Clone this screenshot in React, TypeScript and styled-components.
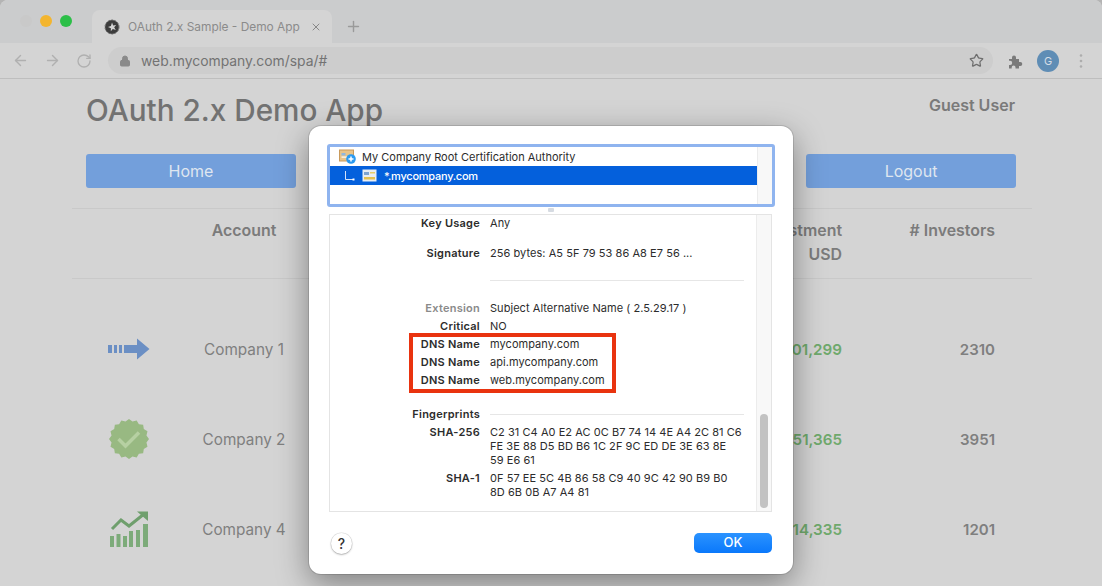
import React from 'react'
import styled, { createGlobalStyle } from 'styled-components'
import { ArrowLeft, ArrowRight, RotateCw, Lock, Star, X, Plus } from 'lucide-react'

const GlobalStyle = createGlobalStyle`
  html, body {
    margin: 0;
    padding: 0;
    background: #b4b4b4;
    font-family: Inter, "Liberation Sans", sans-serif;
  }
`

const Page = styled.div`
  position: relative;
  width: 1102px;
  height: 586px;
  overflow: hidden;
  background: #d4d4d4;
  border-radius: 8px 8px 0 0;
`

const TabStrip = styled.div`
  display: flex;
  align-items: flex-end;
  height: 43px;
  padding-left: 20px;
  box-sizing: border-box;
  background: #cbcccd;
`

const Lights = styled.div`
  display: flex;
  gap: 8px;
  align-self: flex-start;
  margin-top: 15px;
  width: 72px;
`

const Light = styled.span<{ color: string }>`
  width: 12px;
  height: 12px;
  border-radius: 50%;
  background: ${props => props.color};
`

const Tab = styled.div`
  display: flex;
  align-items: center;
  width: 240px;
  height: 33px;
  box-sizing: border-box;
  padding: 0 10px 0 12px;
  border-radius: 8px 8px 0 0;
  background: #d4d4d4;
  color: #8b8b8b;
  font-size: 11.9px;
`

const TabTitle = styled.span`
  flex: 1;
  margin-left: 8px;
  white-space: nowrap;
`

const NewTab = styled.span`
  display: flex;
  align-self: center;
  margin: 9px 0 0 13px;
  color: #9a9a9a;
`

const Toolbar = styled.div`
  display: flex;
  align-items: center;
  height: 36px;
  box-sizing: border-box;
  padding: 0 12px;
  border-bottom: 1px solid #bebebe;
  background: #d4d4d4;
  color: #b0b0b0;
`

const NavIcons = styled.div`
  display: flex;
  align-items: center;
  gap: 15px;
  width: 96px;
`

const Omnibox = styled.div`
  display: flex;
  align-items: center;
  width: 885px;
  flex-shrink: 0;
  height: 27px;
  box-sizing: border-box;
  padding: 0 9px 0 11px;
  border-radius: 14px;
  background: #cdcdcd;
  color: #8a8a8a;
`

const UrlText = styled.span`
  flex: 1;
  margin-left: 10px;
  font-size: 13.9px;
  color: #737373;
`

const ToolbarEnd = styled.div`
  display: flex;
  align-items: center;
  margin-left: 15px;
  color: #7a7a7a;
`

const Avatar = styled.span`
  display: flex;
  align-items: center;
  justify-content: center;
  flex-shrink: 0;
  width: 22px;
  height: 22px;
  margin: 0 20px 0 13px;
  border-radius: 50%;
  background: #5f8db5;
  color: #d4dde6;
  font-size: 11px;
`

const Content = styled.div`
  padding: 0 70px 0 72px;
`

const TitleRow = styled.div`
  display: flex;
  align-items: flex-start;
  justify-content: space-between;
  height: 75px;
  padding: 0 17px 0 14px;
`

const Title = styled.h1`
  margin: 12px 0 0;
  color: #727272;
  font-size: 29.7px;
  font-weight: 500;
  line-height: 38px;
`

const UserName = styled.div`
  margin-top: 16px;
  color: #7a7a7a;
  font-size: 16px;
  font-weight: 600;
  line-height: 20px;
`

const ButtonRow = styled.div`
  display: flex;
  justify-content: space-between;
  padding: 0 16px 0 14px;
`

const PageButton = styled.div`
  width: 210px;
  height: 34px;
  border-radius: 3px;
  background: #739fdb;
  color: #dfe6f0;
  font-size: 16px;
  line-height: 34px;
  text-align: center;
`

const Table = styled.div`
  margin-top: 20px;
  border-top: 1px solid #c9c9c9;
`

const rowGrid = `
  display: grid;
  grid-template-columns: 116px 112px 1fr 90px 153px;
  padding-right: 37px;
`

const HeaderRow = styled.div`
  ${rowGrid}
  height: 70px;
  padding-top: 10px;
  box-sizing: border-box;
  border-bottom: 1px solid #c9c9c9;
  color: #7b7b7b;
  font-size: 15.9px;
  font-weight: 600;
  line-height: 24px;
`

const BodyRow = styled.div`
  ${rowGrid}
  align-items: center;
  height: 90px;
  color: #7f7f7f;
  font-size: 15.3px;
`

const TableBody = styled.div`
  padding-top: 25px;
`

const IconCell = styled.div`
  display: flex;
  justify-content: center;
  margin-left: 36px;
  width: 42px;
`

const CompanyCell = styled.div`
  text-align: center;
  white-space: nowrap;
`

const HeadCell = styled.div<{ align?: string }>`
  grid-column: ${props => (props.align === 'center' ? '2' : 'auto')};
  text-align: ${props => props.align || 'right'};
  white-space: nowrap;
`

const Amount = styled.div`
  grid-column: 4;
  color: #6fa96c;
  font-weight: 600;
  font-size: 15.2px;
  text-align: right;
`

const Count = styled.div`
  font-weight: 600;
  font-size: 15px;
  text-align: right;
`

const Dialog = styled.div`
  position: absolute;
  top: 126px;
  left: 309px;
  width: 484px;
  height: 448px;
  box-sizing: border-box;
  padding: 18px 18px 0 18px;
  border-radius: 12px;
  background: #fff;
  box-shadow: 0 0 0 1px rgba(0, 0, 0, 0.12), 0 10px 32px rgba(0, 0, 0, 0.4);
  color: #2c2c2c;
  font-size: 11px;
  line-height: 14px;
`

const Chain = styled.div`
  display: flex;
  width: 448px;
  height: 63px;
  box-sizing: border-box;
  border: 3px solid #8fb4ef;
  border-radius: 3px;
`

const ChainList = styled.div`
  flex: 1;
`

const ChainRow = styled.div<{ selected?: boolean }>`
  display: flex;
  align-items: center;
  height: 19px;
  padding-left: ${props => (props.selected ? '14px' : '9px')};
  background: ${props => (props.selected ? '#0460dc' : 'transparent')};
  color: ${props => (props.selected ? '#fff' : '#2c2c2c')};
  font-weight: ${props => (props.selected ? 500 : 400)};
  letter-spacing: ${props => (props.selected ? '-0.25px' : '0')};
`

const ChainLabel = styled.span<{ gap: number }>`
  display: flex;
  margin-left: ${props => props.gap}px;
  white-space: nowrap;
`

const Gutter = styled.div`
  width: 15px;
  flex-shrink: 0;
  box-sizing: border-box;
  border-left: 1px solid #ececec;
  background: #f8f8f8;
`

const SplitGrip = styled.div`
  position: absolute;
  top: 82px;
  left: 239px;
  width: 6px;
  height: 4px;
  border-radius: 1px;
  background: #d6dbe2;
`

const Details = styled.div`
  display: flex;
  width: 443px;
  height: 298px;
  margin: 7px 0 0 2px;
  box-sizing: border-box;
  border: 1px solid #e4e4e4;
`

const DetailsBody = styled.div`
  flex: 1;
  overflow: hidden;
  padding-top: 1px;
`

const ScrollGutter = styled(Gutter)`
  position: relative;
`

const Thumb = styled.div`
  position: absolute;
  top: 199px;
  left: 3px;
  width: 8px;
  height: 94px;
  border-radius: 4px;
  background: #c2c2c2;
`

const Row = styled.div<{ top?: number }>`
  display: grid;
  grid-template-columns: 150px 1fr;
  column-gap: 10px;
  margin-top: ${props => props.top ?? 4}px;
`

const Label = styled.div<{ muted?: boolean }>`
  color: ${props => (props.muted ? '#8a8a8a' : '#2c2c2c')};
  font-weight: 600;
  letter-spacing: 0.25px;
  text-align: right;
  white-space: nowrap;
`

const Value = styled.div`
  letter-spacing: 0.05px;
  white-space: nowrap;
`

const Rule = styled.div`
  height: 1px;
  margin: 20px 0 0 160px;
  width: 254px;
  background: #e6e6e6;
`

const SectionRule = styled.div`
  align-self: center;
  width: 254px;
  height: 1px;
  background: #e6e6e6;
`

const Highlight = styled.div`
  position: absolute;
  top: 207px;
  left: 100px;
  width: 207px;
  height: 60px;
  box-sizing: border-box;
  border: 4px solid #e9330f;
`

const Footer = styled.div`
  display: flex;
  align-items: flex-start;
  justify-content: space-between;
  width: 441px;
  margin: 21px 0 0 4px;
`

const HelpButton = styled.div`
  width: 21px;
  height: 21px;
  border-radius: 50%;
  background: #fff;
  box-shadow: 0 0 0 0.5px rgba(0, 0, 0, 0.12), 0 1px 2px rgba(0, 0, 0, 0.25);
  color: #333;
  font-size: 14px;
  font-weight: 500;
  line-height: 21px;
  text-align: center;
`

const OkButton = styled.div`
  width: 78px;
  height: 20px;
  border-radius: 5px;
  background: linear-gradient(#2b93ff, #0a78fb);
  color: #fff;
  font-size: 13px;
  font-weight: 500;
  line-height: 19px;
  text-align: center;
`

const Favicon = () => (
  <svg width="16" height="16" viewBox="0 0 16 16">
    <circle cx="8" cy="8" r="7" fill="#3d3d3d" stroke="#6a6a6a" strokeDasharray="2 1.2" />
    <path d="M8 3.5l1.2 3 3-.6-2 2.4 1.6 2.7-3-1-2 2.2.1-3-2.9-1.2 2.9-1z" fill="#d4d4d4" />
  </svg>
)

const PuzzleIcon = () => (
  <svg width="16" height="16" viewBox="0 0 16 16">
    <path
      d="M1 6h3V4.6a2 2 0 0 1 4 0V6h3v3h1.3a2 2 0 0 1 0 4H11v2.5H7.5v-1.2a1.9 1.9 0 0 0-3.8 0v1.2H1V12h1.1a2.1 2.1 0 0 0 0-4.2H1z"
      fill="#7a7a7a"
    />
  </svg>
)

const DotsIcon = () => (
  <svg width="4" height="16" viewBox="0 0 4 16">
    <circle cx="2" cy="2.5" r="1.3" fill="#adadad" />
    <circle cx="2" cy="8" r="1.3" fill="#adadad" />
    <circle cx="2" cy="13.5" r="1.3" fill="#adadad" />
  </svg>
)

const RootCertIcon = () => (
  <svg width="17" height="15" viewBox="0 0 17 15">
    <rect x="0.5" y="1" width="14" height="11" fill="#e9c48a" stroke="#c99a5b" />
    <rect x="2.5" y="4" width="4" height="2.5" fill="#8fb7e0" />
    <rect x="2.5" y="7.5" width="6" height="1.2" fill="#fff" />
    <circle cx="12" cy="10" r="4.8" fill="#2b9af0" />
    <path d="M9.5 10h5M12 7.5v5" stroke="#fff" strokeWidth="1.5" />
  </svg>
)

const ElbowIcon = () => (
  <svg width="11" height="12" viewBox="0 0 11 12">
    <path d="M1.5 1v8.5H9" fill="none" stroke="#d5e3fa" strokeWidth="1" />
    <rect x="8.5" y="8.5" width="2" height="2" fill="#fff" />
  </svg>
)

const LeafCertIcon = () => (
  <svg width="15" height="13" viewBox="0 0 15 13">
    <rect x="0.5" y="0.5" width="14" height="12" fill="#e8edf3" />
    <rect x="2" y="3" width="5" height="3" fill="#7ea3cf" />
    <rect x="8" y="3" width="5" height="1.5" fill="#e6cc6a" />
    <rect x="2" y="8" width="11" height="2.5" fill="#e3c050" />
  </svg>
)

const ArrowIcon = () => (
  <svg width="42" height="22" viewBox="0 0 42 22">
    <path
      d="M0 7h4v8H0zM6 7h3v8H6zM11 7h3v8h-3zM16 7h13V0.5L41.5 11 29 21.5V15H16z"
      fill="#6b8fc4"
    />
  </svg>
)

const BadgeIcon = () => {
  const points = Array.from({ length: 32 }, (_, i) => {
    const radius = i % 2 === 0 ? 20 : 17.8
    const angle = (i / 32) * Math.PI * 2
    return `${20 + radius * Math.cos(angle)},${20 + radius * Math.sin(angle)}`
  }).join(' ')
  return (
    <svg width="40" height="40" viewBox="0 0 40 40">
      <polygon points={points} fill="#98b982" />
      <path d="M9.5 20l7 7L30 13.5" fill="none" stroke="#b6d0a2" strokeWidth="3.5" />
    </svg>
  )
}

const ChartIcon = () => (
  <svg width="41" height="37" viewBox="0 0 41 37">
    <path
      d="M1 25h4v11H1zM7.5 23h4v13h-4zM14 25h4v11h-4zM20 20h4v16h-4zM27 19h4v17h-4zM34 13h5v23h-5z"
      fill="#7dab7a"
    />
    <path d="M3 18l9-9 8 6 15-12" fill="none" stroke="#6f9f6d" strokeWidth="3" />
    <path d="M28 0.5h11V10z" fill="#6f9f6d" />
  </svg>
)

const companies = [
  { name: 'Company 1', icon: <ArrowIcon />, amount: '$1,301,299', investors: '2310' },
  { name: 'Company 2', icon: <BadgeIcon />, amount: '$1,751,365', investors: '3951' },
  { name: 'Company 4', icon: <ChartIcon />, amount: '$1,114,335', investors: '1201' },
]

const App: React.FC = () => {
  return (
    <Page>
      <GlobalStyle />
      <TabStrip>
        <Lights>
          <Light color="#c9c9c9" />
          <Light color="#f3b52f" />
          <Light color="#2cbf48" />
        </Lights>
        <Tab>
          <Favicon />
          <TabTitle>OAuth 2.x Sample - Demo App</TabTitle>
          <X size={12} color="#888" />
        </Tab>
        <NewTab>
          <Plus size={17} />
        </NewTab>
      </TabStrip>
      <Toolbar>
        <NavIcons>
          <ArrowLeft size={17} />
          <ArrowRight size={17} />
          <RotateCw size={16} />
        </NavIcons>
        <Omnibox>
          <Lock size={12} fill="#8a8a8a" />
          <UrlText>web.mycompany.com/spa/#</UrlText>
          <Star size={15} color="#6e6e6e" />
        </Omnibox>
        <ToolbarEnd>
          <PuzzleIcon />
          <Avatar>G</Avatar>
          <DotsIcon />
        </ToolbarEnd>
      </Toolbar>
      <Content>
        <TitleRow>
          <Title>OAuth 2.x Demo App</Title>
          <UserName>Guest User</UserName>
        </TitleRow>
        <ButtonRow>
          <PageButton>Home</PageButton>
          <PageButton>Logout</PageButton>
        </ButtonRow>
        <Table>
          <HeaderRow>
            <HeadCell align="center">Account</HeadCell>
            <HeadCell />
            <HeadCell>
              Investment
              <br />
              USD
            </HeadCell>
            <HeadCell># Investors</HeadCell>
          </HeaderRow>
          <TableBody>
            {companies.map(company => (
              <BodyRow key={company.name}>
                <IconCell>{company.icon}</IconCell>
                <CompanyCell>{company.name}</CompanyCell>
                <Amount>{company.amount}</Amount>
                <Count>{company.investors}</Count>
              </BodyRow>
            ))}
          </TableBody>
        </Table>
      </Content>
      <Dialog>
        <Chain>
          <ChainList>
            <ChainRow>
              <RootCertIcon />
              <ChainLabel gap={6}>My Company Root Certification Authority</ChainLabel>
            </ChainRow>
            <ChainRow selected>
              <ElbowIcon />
              <ChainLabel gap={7}>
                <LeafCertIcon />
              </ChainLabel>
              <ChainLabel gap={7}>*.mycompany.com</ChainLabel>
            </ChainRow>
          </ChainList>
          <Gutter />
        </Chain>
        <SplitGrip />
        <Details>
          <DetailsBody>
            <Row top={0}>
              <Label>Key Usage</Label>
              <Value>Any</Value>
            </Row>
            <Row top={16}>
              <Label>Signature</Label>
              <Value>256 bytes: A5 5F 79 53 86 A8 E7 56 ...</Value>
            </Row>
            <Rule />
            <Row top={20}>
              <Label muted>Extension</Label>
              <Value>Subject Alternative Name ( 2.5.29.17 )</Value>
            </Row>
            <Row>
              <Label>Critical</Label>
              <Value>NO</Value>
            </Row>
            <Row>
              <Label>DNS Name</Label>
              <Value>mycompany.com</Value>
            </Row>
            <Row>
              <Label>DNS Name</Label>
              <Value>api.mycompany.com</Value>
            </Row>
            <Row>
              <Label>DNS Name</Label>
              <Value>web.mycompany.com</Value>
            </Row>
            <Row top={20}>
              <Label>Fingerprints</Label>
              <SectionRule />
            </Row>
            <Row>
              <Label>SHA-256</Label>
              <Value>
                C2 31 C4 A0 E2 AC 0C B7 74 14 4E A4 2C 81 C6
                <br />
                FE 3E 88 D5 BD B6 1C 2F 9C ED DE 3E 63 8E
                <br />
                59 E6 61
              </Value>
            </Row>
            <Row>
              <Label>SHA-1</Label>
              <Value>
                0F 57 EE 5C 4B 86 58 C9 40 9C 42 90 B9 B0
                <br />
                8D 6B 0B A7 A4 81
              </Value>
            </Row>
          </DetailsBody>
          <ScrollGutter>
            <Thumb />
          </ScrollGutter>
        </Details>
        <Highlight />
        <Footer>
          <HelpButton>?</HelpButton>
          <OkButton>OK</OkButton>
        </Footer>
      </Dialog>
    </Page>
  )
}

export default App
